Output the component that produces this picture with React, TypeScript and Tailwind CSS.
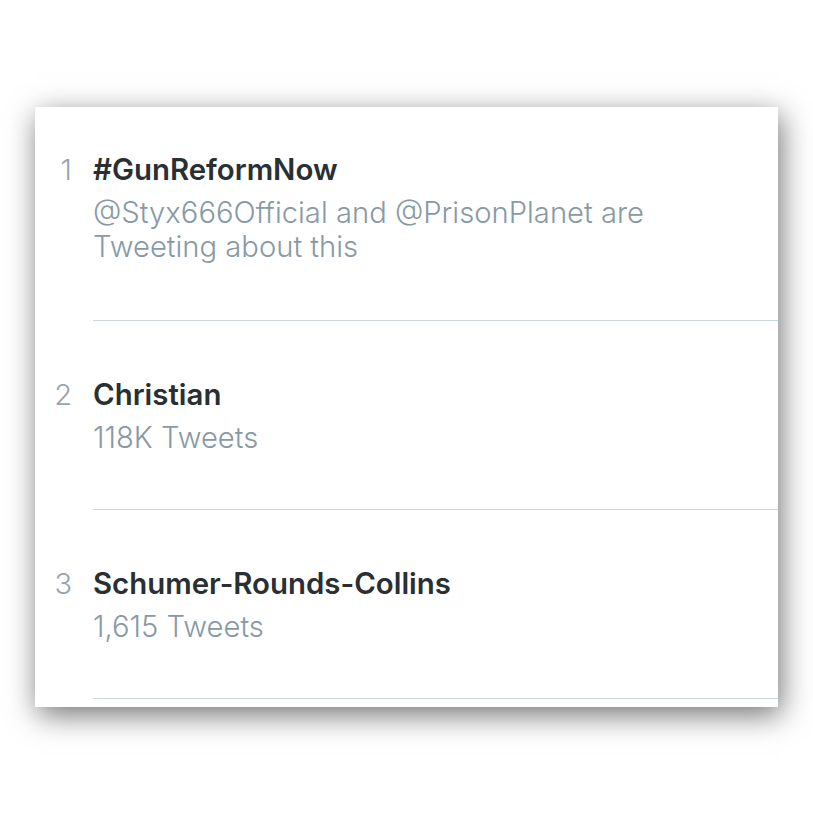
const trends = [
  {
    rank: 1,
    title: "#GunReformNow",
    meta: "@Styx666Official and @PrisonPlanet are Tweeting about this",
  },
  { rank: 2, title: "Christian", meta: "118K Tweets" },
  { rank: 3, title: "Schumer-Rounds-Collins", meta: "1,615 Tweets" },
];

export default function App() {
  return (
    <div className="w-[813px] h-[813px] bg-white pt-[107px] pl-[35px] font-['Inter',sans-serif]">
      <div className="w-[743px] h-[600px] bg-white shadow-[3px_8px_28px_rgba(0,0,0,0.55)] overflow-hidden">
        {trends.map((t, i) => (
          <div key={t.rank} className={`flex ${i === 0 ? "pt-[46px]" : "pt-[57px]"}`}>
            <div className="w-[58px] shrink-0 pr-[21px] text-right text-[29px] leading-[34px] font-light text-[#95a4b0]">
              {t.rank}
            </div>
            <div className={`flex-1 border-b border-[#ccd6dd] ${i === 0 ? "pb-[56px]" : "pb-[54px]"}`}>
              <div className="text-[29.4px] leading-[34px] font-semibold text-[#292f33]">
                {t.title}
              </div>
              <div className="mt-[9px] w-[600px] text-[29.2px] leading-[34px] font-light text-[#8899a6]">
                {t.meta}
              </div>
            </div>
          </div>
        ))}
      </div>
    </div>
  );
}
